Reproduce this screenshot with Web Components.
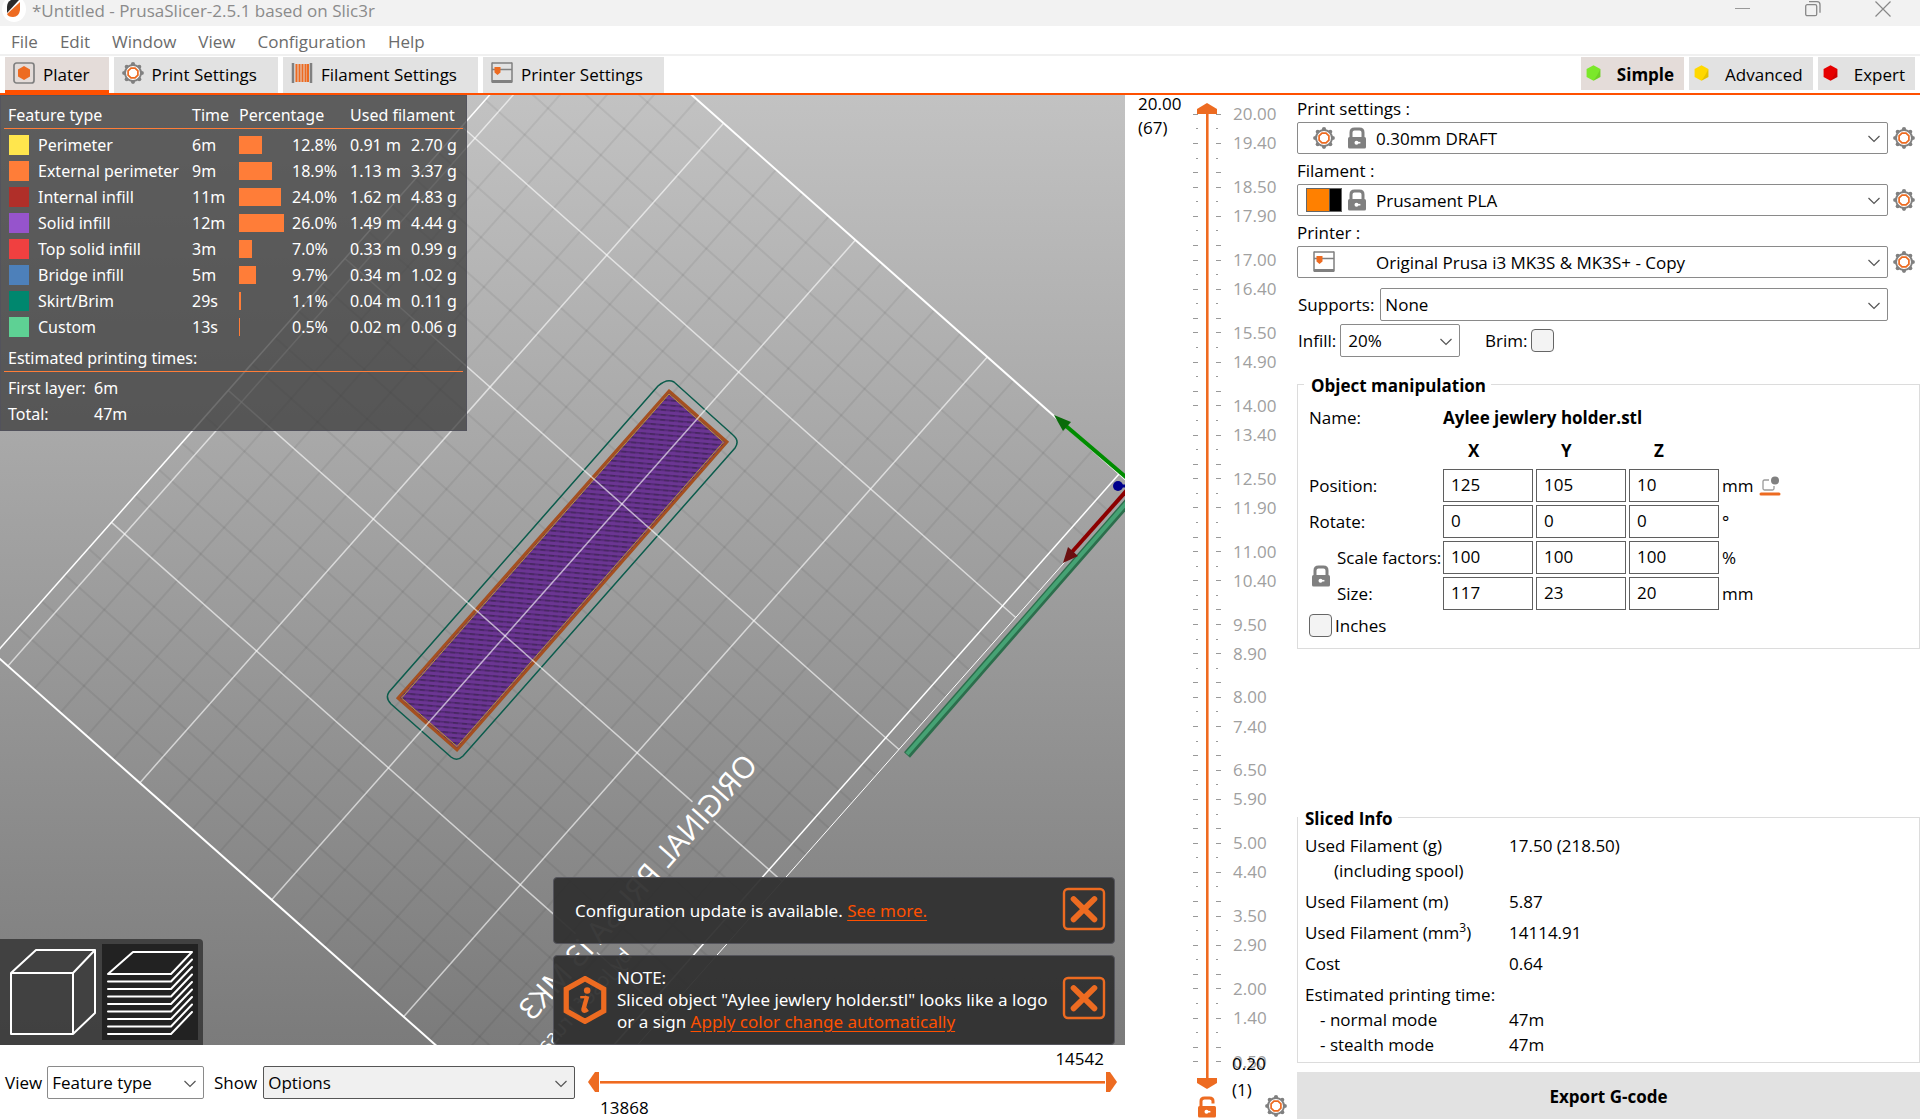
<!DOCTYPE html>
<html lang="en">
<head>
<meta charset="utf-8">
<title>*Untitled - PrusaSlicer-2.5.1 based on Slic3r</title>
<style>
  html, body { height: 100%; margin: 0; }
  body {
    background: #fff; color: #000; overflow: hidden;
    font: 17px/24px "Open Sans", "Noto Sans", sans-serif;
    --accent: #ed6b21; --line: #dcdcdc; --face: #e2e2e2; --sel: #e4dcd9; --edge: #8a8a8a;
  }
</style>
</head>
<body>
<slicer-app></slicer-app>
<script>
const define = (name, html, setup) => {
  const template = document.createElement('template');
  template.innerHTML = '<style>*{box-sizing:border-box}button,input,select{font:inherit;color:inherit}button{border:0;padding:0;background:none}svg{display:block}</style>' + html;
  customElements.define(name, class extends HTMLElement {
    constructor() {
      super();
      this.attachShadow({ mode: 'open' }).append(template.content.cloneNode(true));
    }
    connectedCallback() {
      if (setup && !this.ready) { this.ready = true; setup(this, this.shadowRoot); }
    }
  });
};

/* ---------- icons ---------- */
const ring = (n, r, off = 0) => Array.from({ length: n }, (_, i) => {
  const a = (i + off) * 2 * Math.PI / n;
  return [(11 + r * Math.cos(a)).toFixed(2), (11 + r * Math.sin(a)).toFixed(2)];
});
const G = '#808080', O = '#ed6b21';
const lockBody = c => `<rect x="2" y="10" width="18" height="11.5" rx="1.5" fill="${c}"/><circle cx="10.5" cy="15.7" r="2" fill="#fff"/><path d="M11 15.7h3.4" stroke="#fff" stroke-width="1.6"/>`;
const ICONS = {
  gear: `${ring(8, 8.8).map(p => `<circle cx="${p[0]}" cy="${p[1]}" r="2.1" fill="${G}"/>`).join('')}<circle cx="11" cy="11" r="8" fill="#fff" stroke="${G}" stroke-width="2"/><polygon points="${ring(8, 5.3, .5).join(' ')}" fill="none" stroke="${O}" stroke-width="1.7"/>`,
  lock: `<path d="M5 10V5.5Q5 2 8.500 2h5Q17 2 17 5.500V10" fill="none" stroke="${G}" stroke-width="3"/>${lockBody(G)}`,
  unlock: `<path d="M5 10V5Q5 2 8.500 2h5Q17 2 17 5v2.500" fill="none" stroke="${O}" stroke-width="3"/>${lockBody(O)}`,
  plater: `<rect x="1" y="1" width="20" height="20" rx="2.500" fill="none" stroke="${G}" stroke-width="1.700"/><polygon points="11,4 17,7.500 17,14.500 11,18 5,14.500 5,7.500" fill="${O}"/>`,
  spool: `<path d="M2 1v20M20 1v20" stroke="${G}" stroke-width="2.500"/><path d="M5.500 2v18M8.500 2v18M11.500 2v18M14.500 2v18M17 2v18" stroke="${O}" stroke-width="2.100"/>`,
  printer: `<path d="M1 1h20M1 7.500h20" stroke="${G}" stroke-width="1.500"/><path d="M1 19.500h20" stroke="${G}" stroke-width="3"/><path d="M1 .5v20M21 .5v20" stroke="${G}" stroke-width="1.500"/><path d="M3.500 5h6v5.500l-3 2.500-3-2.500z" fill="${O}"/>`,
  drop: `<path d="M10 5H5.500Q4 5 4 6.500v7Q4 15 5.500 15h8Q15 15 15 13.500V11" fill="none" stroke="#9a9a9a" stroke-width="1.300"/><circle cx="16" cy="5.500" r="4" fill="${G}"/><path d="M2 19h18" stroke="${O}" stroke-width="3" stroke-linecap="round"/>`,
  hex: `<polygon points="11,2 19,6.500 19,15.500 11,20 3,15.500 3,6.500" fill="currentColor"/><path d="M19 6.500V15.500L11 20L15 14z" fill="#000" opacity=".1"/>`,
  chevron: `<path d="M5.500 9l5.500 5.500 5.500-5.500" fill="none" stroke="#555" stroke-width="1.200"/>`,
  close: `<rect x="1" y="1" width="20" height="20" rx="2" fill="none" stroke="${O}" stroke-width="1.200"/><path d="M5.800 6l10.400 10.200M16.200 6L5.800 16.200" stroke="${O}" stroke-width="2.900" stroke-linecap="round"/>`,
  info: `<polygon points="11,1.200 19.600,6 19.600,16 11,20.800 2.400,16 2.400,6" fill="none" stroke="${O}" stroke-width="2.400"/><circle cx="12" cy="6.600" r="1.500" fill="${O}"/><path d="M8.800 9.700h2.400" stroke="${O}" stroke-width="1.100"/><path d="M12 9.200l-1.700 6q-.2 1.500 1.900 0" fill="none" stroke="${O}" stroke-width="2"/>`
};
define('ui-icon', '<style>:host{display:block;flex:none;width:22px;height:22px}svg{width:100%;height:100%}</style><svg viewBox="0 0 22 22" aria-hidden="true"></svg>',
  (el, root) => { root.querySelector('svg').innerHTML = ICONS[el.getAttribute('name')]; });

/* ---------- title bar and menu ---------- */
define('title-bar', `<style>
  :host{display:flex;justify-content:space-between;height:26px;background:#f2f2f2;color:#8b8b8b;padding-left:2px;line-height:21px}
  .name{display:flex;gap:6px} .win{display:flex;gap:54px;padding-right:29px}
  button{width:16px;height:18px}
</style>
<div class="name"><svg width="24" height="24" viewBox="0 0 24 24"><ellipse cx="12" cy="9" rx="12" ry="13" fill="#fff"/><path d="M17 0H9Q5 2 5 7V13z" fill="#2b2b2b"/><path d="M18 2v8q-1 7-7 7-5 0-6-3z" fill="#ed6b21"/></svg><span>*Untitled - PrusaSlicer-2.5.1 based on Slic3r</span></div>
<div class="win">
  <button aria-label="Minimize"><svg width="16" height="18"><path d="M0 8.500h15" stroke="#999"/></svg></button>
  <button aria-label="Restore"><svg width="16" height="18"><rect x=".7" y="4.700" width="11" height="11" rx="1.500" fill="none" stroke="#888" stroke-width="1.300"/><path d="M4 1.700h8q3 0 3 3v8" fill="none" stroke="#888" stroke-width="1.300"/></svg></button>
  <button aria-label="Close"><svg width="16" height="18"><path d="M.5 1.500l15 15M15.500 1.500l-15 15" stroke="#888" stroke-width="1.200"/></svg></button>
</div>`);
define('menu-bar', `<style>
  :host{display:block;border-bottom:2px solid #f0f0f0}
  nav{display:flex;gap:22px;padding:4px 11px 0;color:#6b6b6b} button{line-height:24px}
</style><nav><button>File</button><button>Edit</button><button>Window</button><button>View</button><button>Configuration</button><button>Help</button></nav>`);

define('tab-button', `<style>
  :host{display:block}
  button{display:flex;gap:8px;align-items:center;height:36px;padding:0 21px 0 8px;background:var(--face)}
  :host([active]) button{background:var(--sel);border-bottom:3px solid #ff5000;padding-top:3px;padding-right:19px}
  ui-icon{margin-bottom:4px}
</style><button><ui-icon></ui-icon><slot></slot></button>`, (el, root) => {
  const icon = document.createElement('ui-icon');
  icon.setAttribute('name', el.getAttribute('icon'));
  root.querySelector('ui-icon').replaceWith(icon);
});
define('mode-button', `<style>
  :host{display:block}
  button{display:flex;align-items:center;gap:14px;height:33px;padding:2px 10px 0 3px;background:var(--face)}
  :host([active]) button{background:var(--sel);font-weight:700}
  ui-icon{width:19px;height:20px;color:var(--tone);margin-bottom:4px}
</style><button><ui-icon name="hex"></ui-icon><slot></slot></button>`);
define('tab-strip', `<style>
  :host{display:flex;justify-content:space-between;padding:1px 5px 0;border-bottom:2px solid #ff5000}
  div{display:flex;gap:5px}
</style>
<div><tab-button icon="plater" active>Plater</tab-button><tab-button icon="gear">Print Settings</tab-button><tab-button icon="spool">Filament Settings</tab-button><tab-button icon="printer">Printer Settings</tab-button></div>
<div><mode-button active style="--tone:#7be82a">Simple</mode-button><mode-button style="--tone:#ffd800">Advanced</mode-button><mode-button style="--tone:#e60000">Expert</mode-button></div>`);

/* ---------- combo box: label, optional icons in the light DOM ---------- */
define('combo-box', `<style>
  :host{display:flex;align-items:center;gap:var(--gap,6px)}
  :host([stacked]){flex-direction:column;align-items:stretch;gap:0}
  :host([stacked]) label{line-height:27px}
  .row{display:flex;align-items:center;gap:5px;flex:1;min-width:0}
  .box{display:flex;align-items:center;flex:1;min-width:0;height:33px;border:1px solid var(--edge);border-radius:2px;background:var(--fill,#fff);padding-right:2px}
  :host([stacked]) .box{height:32px}
  select{flex:1;min-width:0;appearance:none;border:0;background:none;outline:0;padding:1px 0 0 var(--pad,4px);line-height:24px}
  .side{display:none} :host([stacked]) .side{display:block}
  ui-icon[name=chevron]{margin-left:-22px;pointer-events:none}
  .pics{display:none;align-items:center;width:74px;padding-left:8px;gap:7px}
  :host([stacked]) .pics{display:flex}
</style>
<label for="s"></label>
<div class="row"><div class="box"><span class="pics"><slot></slot></span><select id="s"></select><ui-icon name="chevron"></ui-icon></div>
<button class="side" aria-label="Edit preset"><ui-icon name="gear"></ui-icon></button></div>`, (el, root) => {
  root.querySelector('label').textContent = el.getAttribute('label');
  root.querySelector('select').add(new Option(el.getAttribute('value')));
});

/* ---------- check box ---------- */
define('check-box', `<style>
  :host{display:block} label{display:flex;align-items:center;gap:3px}
  :host([before]) label{flex-direction:row-reverse;justify-content:flex-end;gap:4px}
  input{appearance:none;margin:0;width:23px;height:23px;border:1px solid #666;border-radius:4px;background:#f3f3f3}
</style><label><input type="checkbox"><slot></slot></label>`);

/* ---------- legend over the 3D view ---------- */
define('feature-legend', `<style>
  :host{display:block;background:rgba(54,54,54,.72);border:1px solid rgba(80,80,95,.6);color:#fff;padding:6px 3px 3px;width:467px;font:16px/26px "Noto Sans",sans-serif}
  table{border-collapse:collapse;width:100%;table-layout:fixed}
  th,td{font-weight:400;text-align:left;padding:0;height:26px;white-space:nowrap}
  thead th{border-bottom:1px solid #ff7d38}
  tbody:before{content:"";display:block;height:3px}
  th:first-child{padding-left:4px}
  .key{display:flex;align-items:center;gap:9px;line-height:26px;padding-left:1px}
  i{width:20px;height:20px;background:var(--c)} b{display:block;height:18px;width:var(--w);background:#ff7d38}
  h3{margin:5px 0 3px;padding-left:4px;font:inherit;border-bottom:1px solid #ff7d38}
  dl{display:grid;grid-template-columns:86px 1fr;margin:0;padding-left:4px} dd{margin:0}
</style>
<table><colgroup><col style="width:188px"><col style="width:47px"><col style="width:53px"><col style="width:58px"><col style="width:61px"><col></colgroup>
<thead><tr><th>Feature type</th><th>Time</th><th colspan="2">Percentage</th><th colspan="2">Used filament</th></tr></thead><tbody></tbody></table>
<h3>Estimated printing times:</h3>
<dl><dt>First layer:</dt><dd>6m</dd><dt>Total:</dt><dd>47m</dd></dl>`, (el, root) => {
  root.querySelector('tbody').innerHTML = [
    ['#ffe64d', 'Perimeter', '6m', 23, '12.8%', '0.91 m', '2.70 g'],
    ['#ff7d38', 'External perimeter', '9m', 33, '18.9%', '1.13 m', '3.37 g'],
    ['#b02f29', 'Internal infill', '11m', 42, '24.0%', '1.62 m', '4.83 g'],
    ['#9654cc', 'Solid infill', '12m', 45, '26.0%', '1.49 m', '4.44 g'],
    ['#f04040', 'Top solid infill', '3m', 13, '7.0%', '0.33 m', '0.99 g'],
    ['#4d80ba', 'Bridge infill', '5m', 17, '9.7%', '0.34 m', '1.02 g'],
    ['#00876e', 'Skirt/Brim', '29s', 2, '1.1%', '0.04 m', '0.11 g'],
    ['#5ed194', 'Custom', '13s', 1, '0.5%', '0.02 m', '0.06 g']
  ].map(r => `<tr><th><div class="key"><i style="--c:${r[0]}"></i>${r[1]}</div></th><td>${r[2]}</td><td><b style="--w:${r[3]}px"></b></td><td>${r[4]}</td><td>${r[5]}</td><td>${r[6]}</td></tr>`).join('');
});

/* ---------- notifications ---------- */
define('toast-note', `<style>
  :host{display:flex;align-items:center;min-height:67px;padding:0 8px 0 7px;background:rgba(48,48,48,.95);border:1px solid #55555c;border-radius:4px;color:#fff;font:17px/22px "Noto Sans",sans-serif}
  .text{flex:1;padding-left:14px;white-space:nowrap} :host([info]) .text{padding-left:8px}
  :host([info]){min-height:90px}
  ui-icon{width:48px;height:48px} ui-icon[name=info]{display:none} :host([info]) ui-icon[name=info]{display:block}
  button{margin:-4px 0 0} button ui-icon{width:44px;height:44px}
  ::slotted(a){color:#ff5000;text-underline-offset:3px}
</style><ui-icon name="info"></ui-icon><div class="text"><slot></slot></div><button aria-label="Close"><ui-icon name="close"></ui-icon></button>`);

/* ---------- view toolbar ---------- */
define('view-switch', `<style>
  :host{display:flex;gap:4px;width:203px;height:106px;padding:5px 5px 5px 4px;background:rgba(54,54,54,.85);border-top-right-radius:4px}
  button{width:94px;height:96px} .on{background:#222;width:96px} svg{width:96px;height:96px}
  path{fill:none;stroke:#fff;stroke-width:2;stroke-linejoin:round;stroke-linecap:round}
</style>
<button aria-label="3D editor view"><svg viewBox="4 944 96 96"><path d="M11 973L36 950H95V1013L73 1034H11ZM11 973H73V1034M73 973L95 950"/></svg></button>
<button class="on" aria-label="Preview"><svg viewBox="102 944 96 96"><path d="M108 974L133 952H192L171 974Z"/><path class="l"/></svg></button>`, (el, root) => {
  root.querySelector('.l').setAttribute('d', Array.from({ length: 8 }, (_, i) => `M108 ${981.5 + i * 7.5}H171L192 ${959.5 + i * 7.5}`).join(''));
});

/* ---------- 3D scene ---------- */
define('plate-scene', `<style>
  :host{display:block;background:linear-gradient(#c2c2c2,#7b7b7b)}
  svg{width:100%;height:100%} line{vector-effect:non-scaling-stroke}
  text{fill:#fff;font-family:"Open Sans",sans-serif}
</style>
<svg viewBox="0 0 1125 950" preserveAspectRatio="xMidYMid slice">
  <defs>
    <pattern id="h" width="9" height="5" patternUnits="userSpaceOnUse" patternTransform="rotate(5)"><rect width="9" height="5" fill="#6b3593"/><rect width="9" height="1.600" fill="#502871"/><rect x="2" width="5" height="1.600" fill="#45265f"/></pattern>
  </defs>
  <g class="minor" transform="matrix(116.750 -131.950 131.900 116.900 7.900 570.500)"></g>
  <path d="M658 291L389 597Q385 603 391 609L451 662Q457 667 463 661L735 353Q740 346 733 340L674 287Q667 283 658 291Z" fill="none" stroke="#0b5c4c" stroke-width="1.500"/>
  <polygon points="669,296 727,347 457,655 398,603" fill="url(#h)" stroke="#a5501f" stroke-width="3"/>
  <polygon points="669,299 723.500,347 457,651.500 401.500,603" fill="none" stroke="#c29a2c" stroke-width="1"/>
  <g class="major" transform="matrix(116.750 -131.950 131.900 116.900 7.900 571)"></g>
  <text font-size="30" font-weight="500" transform="matrix(-.663 .749 .748 .663 759 671)">ORIGINAL PRUSA i3 MK3</text>
  <text font-size="20" font-weight="500" transform="matrix(-.663 .749 .748 .663 633 861)">by Josef Prusa</text>
  <path d="M1128 407L907 660" stroke="#2c6e4c" stroke-width="8"/><path d="M1128 406L907 659" stroke="#46a274" stroke-width="4"/>
  <path d="M1128 384L1066 331" stroke="#008c00" stroke-width="4"/><polygon points="1054,320 1071,327 1063,336" fill="#0a6b0a"/>
  <path d="M1128 394L1072 457" stroke="#8c0000" stroke-width="4"/><polygon points="1063,468 1068,452 1078,461" fill="#6b1010"/>
  <circle cx="1118" cy="391" r="5" fill="#00008c"/><path d="M1118 391h7" stroke="#00008c" stroke-width="3"/>
</svg>`, (el, root) => {
  const line = (u1, v1, u2, v2, c, w) => `<line x1="${u1}" y1="${v1}" x2="${u2}" y2="${v2}" stroke="${c}" stroke-width="${w}"/>`;
  let minor = '', major = '';
  const dim = 'rgba(0,0,0,.06)', pale = 'rgba(255,255,255,.62)', bright = '#fff';
  for (let i = 1; i < 25; i++) if (i % 5) minor += line(i / 5, -.1, i / 5, 4.1, dim, 2);
  for (let i = 1; i < 20; i++) if (i % 5) minor += line(0, i / 5, 5, i / 5, dim, 2);
  for (let i = 1; i < 5; i++) {
    if (i < 3) major += line(i, -.1, i, 3.42, pale, 1.5) + line(i, 3.58, i, 4.1, pale, 1.5);
    else major += line(i, -.1, i, 4.1, pale, 1.5);
  }
  for (let i = 0; i < 4; i++) major += line(0, i, 5, i, pale, 1.5);
  major += line(0, 4, 5, 4, bright, 1.5) + line(0, -.1, 5, -.1, bright, 1.5) + line(0, 4.1, 5, 4.1, bright, 1)
    + line(0, -.1, 0, 4.1, bright, 2) + line(5, -.1, 5, 4.1, bright, 2);
  root.querySelector('.minor').innerHTML = minor;
  root.querySelector('.major').innerHTML = major;
});

/* ---------- preview: scene with overlays ---------- */
define('preview-canvas', `<style>
  :host{position:relative;display:block;overflow:hidden}
  plate-scene{width:100%;height:100%}
  feature-legend{position:absolute;left:0;top:0}
  view-switch{position:absolute;left:0;bottom:0}
  .notes{position:absolute;right:10px;bottom:0;width:562px;display:flex;flex-direction:column;gap:11px}
</style>
<plate-scene></plate-scene><feature-legend></feature-legend><view-switch></view-switch>
<div class="notes">
<toast-note>Configuration update is available. <a href="#more">See more.</a></toast-note>
<toast-note info>NOTE:<br>Sliced object "Aylee jewlery holder.stl" looks like a logo<br>or a sign <a href="#color">Apply color change automatically</a></toast-note>
</div>`);

/* ---------- vertical layer slider ---------- */
define('layer-slider', `<style>
  :host{display:grid;grid-template-columns:73px 18px 1fr;position:relative}
  .top{padding-left:13px;display:flex;flex-direction:column;gap:6px;line-height:18px}
  .scale{display:flex;flex-direction:column;padding:12px 0 50px;min-height:0}
  .scale span{flex:1;min-height:0;display:flex;align-items:center;gap:12px;line-height:14px;color:#a0a0a0}
  .scale span:before{content:"";width:2px;height:1px;background:#999}
  .scale .long:before{width:5px}
  .left span{justify-content:flex-end}
  .left{width:8px}
  .track{display:flex;flex-direction:column;align-items:center;padding-top:8px}
  .track i{flex:1;width:3px;background:linear-gradient(90deg,#ed6b21 66%,#ffa678 66%)}
  .track svg{width:20px;height:11px;fill:#ed6b21} .track button{margin:7px 0 1px}
  .read{position:absolute;left:107px;bottom:16px;line-height:26px}
  .gear{position:absolute;left:140px;bottom:2px}
  input{position:absolute;left:72px;top:8px;width:20px;height:calc(100% - 40px);margin:0;opacity:0;writing-mode:vertical-lr;direction:rtl;pointer-events:none}
  .l{display:flex;justify-content:space-between}
</style>
<div class="l"><div class="top"><span>20.00</span><span>(67)</span></div><div class="scale left"></div></div>
<div class="track"><svg viewBox="0 0 20 11"><path d="M10 0L20 6V11H0V6Z"/></svg><i></i><svg viewBox="0 0 20 11"><path d="M0 0H20V5L10 11L0 5Z"/></svg><button aria-label="Unlock"><ui-icon name="unlock"></ui-icon></button></div>
<div class="scale right"></div>
<div class="read">0.20<br>(1)</div>
<button class="gear" aria-label="Slider settings"><ui-icon name="gear"></ui-icon></button>
<input type="range" min="1" max="67" value="67" aria-label="Top layer"><input type="range" min="1" max="67" value="1" aria-label="Bottom layer">`, (el, root) => {
  const rows = labelled => Array.from({ length: 66 }, (_, i) => {
    const k = i % 5, long = k !== 1 && k !== 3;
    const text = labelled && (k === 0 || k === 2) ? (20 - i * .3).toFixed(2) : '';
    return `<span class="${long ? 'long' : ''}">${text}</span>`;
  }).join('');
  root.querySelector('.left').innerHTML = rows(false);
  root.querySelector('.right').innerHTML = rows(true);
});

/* ---------- bottom bar with the move slider ---------- */
define('move-slider', `<style>
  :host{display:flex;flex-direction:column;position:relative;height:74px}
  .hi{text-align:right;padding-right:13px;line-height:27px} .lo{padding:5px 0 0 12px;line-height:22px}
  .bar{display:flex;align-items:center;gap:1px;height:20px} .bar i{flex:1;height:3px;background:linear-gradient(#ed6b21 66%,#ffa678 66%)}
  svg{width:11px;height:20px;fill:#ed6b21}
  input{position:absolute;left:0;top:27px;width:100%;height:20px;margin:0;opacity:0;pointer-events:none}
</style>
<span class="hi">14542</span>
<div class="bar"><svg viewBox="0 0 11 20"><path d="M11 0V20H7L0 10L7 0Z"/></svg><i></i><svg viewBox="0 0 11 20"><path d="M0 0V20H4L11 10L4 0Z"/></svg></div>
<span class="lo">13868</span>
<input type="range" min="13868" max="14542" value="14542" aria-label="Last move"><input type="range" min="13868" max="14542" value="13868" aria-label="First move">`);
define('view-bar', `<style>
  :host{display:flex;padding-left:5px}
  .f{padding-top:21px} .view{width:199px;--gap:5px} .show{width:361px;margin-left:10px;--fill:#f0f0f0;--edge:#555}
  move-slider{flex:1;margin-left:13px;margin-right:8px}
</style>
<div class="f"><combo-box class="view" label="View" value="Feature type"></combo-box></div>
<div class="f"><combo-box class="show" label="Show" value="Options"></combo-box></div>
<move-slider></move-slider>`);

/* ---------- right column ---------- */
define('group-box', `<style>
  :host{display:block} fieldset{margin:0;border:1px solid var(--line);padding:0 0 0 var(--in,7px);min-width:0}
  legend{padding:4px 5px 0 7px;margin-left:calc(-1 * var(--shift,7px));font-weight:700;line-height:20px}
</style><fieldset><legend></legend><slot></slot></fieldset>`, (el, root) => { root.querySelector('legend').textContent = el.getAttribute('label'); });

define('object-panel', `<style>
  :host{display:block}
  group-box{--in:11px;--shift:5px}
  .g{display:grid;grid-template-columns:28px 100px repeat(3,90px) 34px 22px;grid-template-rows:40px 27px repeat(4,33px) 25px;gap:3px;align-items:center;padding-bottom:10px}
  .w{grid-column:1/3} .name{grid-column:3/-1;font-weight:700;padding-top:4px} .n{padding-top:4px}
  .ax{font-weight:700;padding-left:25px;align-self:start}
  input{width:90px;height:33px;border:1px solid #5f5f5f;padding:0 0 2px 7px;background:#fff}
  .lock{grid-row:5/7;grid-column:1;margin-left:1px} .in{margin-left:-3px;white-space:nowrap}
  .i{grid-column:1/-1}
</style>
<group-box label="Object manipulation"><div class="g">
<span class="w n">Name:</span><span class="name">Aylee jewlery holder.stl</span>
<span class="w"></span><span class="ax" id="x">X</span><span class="ax" id="y">Y</span><span class="ax" id="z">Z</span><span></span><span></span>
</div></group-box>`, (el, root) => {
  const row = (id, label, cls, vals, unit) => `<label class="${cls}" id="${id}" for="${id}0">${label}</label>`
    + vals.map((v, i) => `<input id="${id}${i}" value="${v}" aria-labelledby="${id} ${'xyz'[i]}">`).join('') + `<span>${unit}</span>`;
  root.querySelector('.g').insertAdjacentHTML('beforeend',
    row('pos', 'Position:', 'w', [125, 105, 10], 'mm') + '<button aria-label="Drop to bed"><ui-icon name="drop"></ui-icon></button>'
    + row('rot', 'Rotate:', 'w', [0, 0, 0], '°') + '<span></span>'
    + '<button class="lock" aria-label="Lock scale"><ui-icon name="lock"></ui-icon></button>'
    + row('scl', 'Scale factors:', 'in', [100, 100, 100], '%') + '<span></span>'
    + row('siz', 'Size:', 'in', [117, 23, 20], 'mm') + '<span></span>'
    + '<check-box class="i">Inches</check-box>');
});

define('sliced-info', `<style>
  :host{display:block} table{border-collapse:collapse;margin:4px 0 5px}
  th,td{font-weight:400;text-align:left;padding:0;line-height:25px;height:25px;white-space:nowrap} th{width:204px}
  .s th,.s td{padding-top:6px} .d1{padding-left:15px} .d2{padding-left:29px} sup{font-size:12px;line-height:0}
</style>
<group-box label="Sliced Info"><table>
<tr><th>Used Filament (g)</th><td>17.50 (218.50)</td></tr>
<tr><th class="d2">(including spool)</th><td></td></tr>
<tr class="s"><th>Used Filament (m)</th><td>5.87</td></tr>
<tr class="s"><th>Used Filament (mm<sup>3</sup>)</th><td>14114.91</td></tr>
<tr class="s"><th>Cost</th><td>0.64</td></tr>
<tr class="s"><th>Estimated printing time:</th><td></td></tr>
<tr><th class="d1">- normal mode</th><td>47m</td></tr>
<tr><th class="d1">- stealth mode</th><td>47m</td></tr>
</table></group-box>`);

define('side-panel', `<style>
  :host{display:flex;flex-direction:column}
  .presets{display:flex;flex-direction:column;gap:3px;padding-right:5px}
  .sup{margin:10px 32px 0 1px} .line{display:flex;align-items:center;gap:25px;margin:3px 0 15px 1px}
  .inf{width:162px;--pad:7px;--gap:4px}
  ui-icon{margin-left:7px} ui-icon+ui-icon{margin-left:4px}
  .sw{display:flex;width:36px;height:24px;border:1px solid #666;background:#ff8000;justify-content:flex-end}
  .sw:after{content:"";width:11px;background:#000;border-left:1px solid #555}
  .sw+ui-icon{margin-left:-3px}
  sliced-info{margin-top:auto}
  .go{height:47px;margin-top:9px;background:var(--face);font-weight:700;padding-top:3px}
</style>
<div class="presets">
<combo-box stacked label="Print settings :" value="0.30mm DRAFT"><ui-icon name="gear"></ui-icon><ui-icon name="lock"></ui-icon></combo-box>
<combo-box stacked label="Filament :" value="Prusament PLA"><span class="sw"></span><ui-icon name="lock"></ui-icon></combo-box>
<combo-box stacked label="Printer :" value="Original Prusa i3 MK3S &amp; MK3S+ - Copy"><ui-icon name="printer"></ui-icon></combo-box>
</div>
<combo-box class="sup" label="Supports:" value="None"></combo-box>
<div class="line"><combo-box class="inf" label="Infill:" value="20%"></combo-box><check-box before>Brim:</check-box></div>
<object-panel></object-panel>
<sliced-info></sliced-info>
<button class="go">Export G-code</button>`);

/* ---------- application frame ---------- */
define('slicer-app', `<style>
  :host{display:flex;flex-direction:column;height:100vh}
  main{flex:1;min-height:0;display:grid;grid-template-columns:minmax(0,1fr) 172px 623px;grid-template-rows:minmax(0,1fr) 74px}
  layer-slider,side-panel{grid-row:1/3} preview-canvas{grid-column:1;grid-row:1} view-bar{grid-column:1;grid-row:2}
  layer-slider{grid-column:2} side-panel{grid-column:3}
</style>
<title-bar></title-bar><menu-bar></menu-bar><tab-strip></tab-strip>
<main><preview-canvas></preview-canvas><layer-slider></layer-slider><side-panel></side-panel><view-bar></view-bar></main>`);
</script>
</body>
</html>
